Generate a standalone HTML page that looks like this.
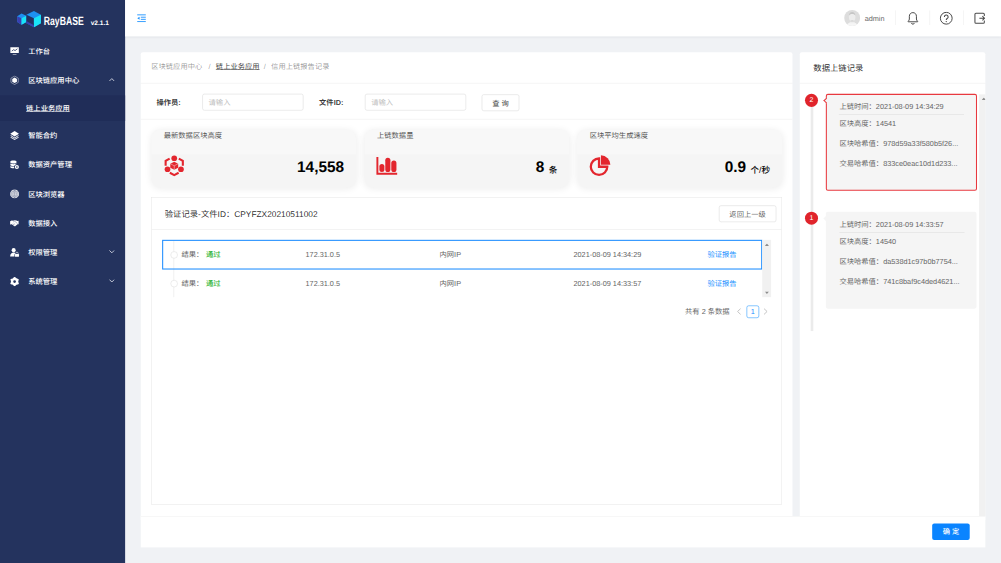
<!DOCTYPE html>
<html lang="zh-CN">
<head>
<meta charset="utf-8">
<title>RayBASE</title>
<style>
html,body{margin:0;padding:0;}
body{width:1001px;height:563px;overflow:hidden;background:#f0f2f5;}
#app{position:absolute;left:0;top:0;width:1920px;height:1080px;transform:scale(0.521354);transform-origin:0 0;background:#f0f2f5;
 font-family:"Liberation Sans","Noto Sans CJK SC",sans-serif;font-size:14px;color:rgba(0,0,0,.65);overflow:hidden;text-rendering:geometricPrecision;}
#app *{box-sizing:border-box;}
.abs{position:absolute;}
.t{position:absolute;white-space:nowrap;line-height:20px;height:20px;}
/* sidebar */
#side{position:absolute;left:0;top:0;width:240px;height:1080px;background:#24335e;}
#side .mi{position:absolute;left:0;width:240px;height:56px;color:#fff;font-weight:500;}
#side .mi .lbl{position:absolute;left:54px;top:18px;line-height:20px;font-size:14px;white-space:nowrap;}
#side .mi svg.ic{position:absolute;left:18.700px;top:19px;width:18px;height:18px;}
#side .mi svg.ch{position:absolute;left:208.500px;top:22px;width:11px;height:9.200px;}
#sub{position:absolute;left:0;top:182.500px;width:240px;height:49px;background:#202d58;}
/* header */
#head{position:absolute;left:240px;top:0;width:1680px;height:70px;background:#fff;box-shadow:0 1px 5px rgba(0,21,41,.09);}
.vdiv{position:absolute;top:20px;width:1px;height:28px;background:#ebebeb;}
/* cards */
.card{position:absolute;background:#fff;border-radius:4px;}
.hline{position:absolute;height:1px;background:#ebebeb;}
.inp{position:absolute;height:32px;border:1px solid #d9d9d9;border-radius:4px;background:#fff;}
.inp span{position:absolute;left:11px;top:5px;line-height:20px;color:#bfbfbf;font-size:14px;}
.btn{position:absolute;height:32px;border:1px solid #d9d9d9;border-radius:4px;background:#fff;text-align:center;line-height:32px;font-size:14px;color:rgba(0,0,0,.65);white-space:nowrap;}
.stat{position:absolute;top:248px;width:393px;height:111px;background:#f5f5f5;border-radius:18px;box-shadow:0 2px 14px rgba(0,0,0,.07);}
.stat .tt{position:absolute;left:24px;top:2px;line-height:20px;font-size:14px;color:#555;}
.stat .val{position:absolute;right:23px;top:48px;line-height:48px;font-size:29.5px;font-weight:bold;color:#000;white-space:nowrap;}
.stat .val small{font-size:16.500px;font-weight:500;margin-left:8.500px;position:relative;top:2.500px;}
.stat svg{position:absolute;left:24px;top:50px;width:40px;height:40px;overflow:visible;}
.rec{position:absolute;left:50px;width:289px;height:185px;background:#f5f5f5;border-radius:4px;color:#666;}
.rec .r{position:absolute;left:25px;white-space:nowrap;line-height:20px;font-size:14px;}
.badge{position:absolute;left:10px;width:25px;height:25px;border-radius:50%;background:#e0242b;color:#fff;font-size:13.500px;text-align:center;line-height:24px;}
</style>
</head>
<body>
<div id="app">

<!-- ============ SIDEBAR ============ -->
<div id="side">
  <svg class="abs" style="left:32px;top:19.500px;width:47.500px;height:33.500px" viewBox="0 0 46 33" preserveAspectRatio="none">
    <polygon points="1,11 9,6 18,10 18,22 9,27 1,22" fill="#1e90f0"/>
    <polygon points="1,11 9,15 9,27 1,22" fill="#3a3fb0"/>
    <polygon points="9,15 18,10 18,22 9,27" fill="#19e3f7"/>
    <polygon points="18,8 32,1 45,8 45,24 32,32 18,24" fill="#1e90f0"/>
    <polygon points="18,8 32,15 32,32 18,24" fill="#23315f"/>
    <polygon points="32,15 45,8 45,24 32,32" fill="#19e3f7"/>
    <polygon points="18,20 32,28 32,32 18,24" fill="#3a3fb0"/>
  </svg>
  <div class="abs" style="left:84px;top:25px;line-height:28px;font-size:23px;font-weight:bold;color:#fff;transform:scaleX(.722);transform-origin:0 0;white-space:nowrap;">RayBASE</div>
  <div class="abs" style="left:174px;top:35px;line-height:16px;font-size:12.5px;font-weight:bold;color:#fff;white-space:nowrap;">v2.1.1</div>

  <div id="sub"><div class="abs" style="left:50px;top:14.500px;line-height:20px;font-size:14px;color:#fff;font-weight:500;text-decoration:underline;text-underline-offset:1px;white-space:nowrap;">链上业务应用</div></div>

  <div class="mi" style="top:70px">
    <svg class="ic" viewBox="0 0 20 20"><path d="M1 2h18v12H1z M6 17h8v1.5H6z" fill="#fff"/><path d="M4 10l4-3 3 2 5-4" stroke="#23315f" stroke-width="1.6" fill="none"/></svg>
    <span class="lbl">工作台</span></div>
  <div class="mi" style="top:126px">
    <svg class="ic" viewBox="0 0 20 20"><path d="M10 1l7.8 4.5v9L10 19l-7.8-4.5v-9z" fill="none" stroke="#fff" stroke-width="1.05" opacity=".9"/><path d="M10 4.2l5 2.9v5.8l-5 2.9-5-2.9V7.1z" fill="#fff"/></svg>
    <span class="lbl">区块链应用中心</span>
    <svg class="ch" viewBox="0 0 12 10"><path d="M1 8l5-5 5 5" fill="none" stroke="#f0f2f8" stroke-width="1.600"/></svg></div>
  <div class="mi" style="top:232px">
    <svg class="ic" viewBox="0 0 20 20"><path d="M10 0.500l9.300 5.700L10 11.900 0.700 6.200z" fill="#fff"/><path d="M2.600 9.500L10 14l7.400-4.500 1.900 1.150L10 16.300 0.700 10.650z M2.600 12.900L10 17.400l7.400-4.500 1.900 1.150L10 19.700 0.700 14.050z" fill="#fff" opacity=".92"/></svg>
    <span class="lbl">智能合约</span></div>
  <div class="mi" style="top:288px">
    <svg class="ic" viewBox="0 0 20 20"><path d="M1 3c0-1.400 3-2.200 6.500-2.200S14 1.600 14 3v2c0 1.400-3 2.200-6.500 2.200S1 6.400 1 5z M1 7.400c1.200 1 3.600 1.400 6.500 1.400s5.300-.4 6.500-1.400v1.800a5.500 5.500 0 0 0-4.800 3.300c-.5.100-1.100.100-1.700.100C4 12.600 1 11.800 1 10.400z M1 12.600c1.200 1 3.600 1.400 6.500 1.400.5 0 1 0 1.400-.1a5.500 5.500 0 0 0 .6 3.400c-.6.100-1.300.100-2 .1C4 17.400 1 16.600 1 15.200z" fill="#fff"/><circle cx="14.800" cy="14.800" r="4.400" fill="#fff"/><circle cx="14.800" cy="14.800" r="1.700" fill="#23315f"/></svg>
    <span class="lbl">数据资产管理</span></div>
  <div class="mi" style="top:344px">
    <svg class="ic" viewBox="0 0 20 20"><circle cx="10" cy="10" r="9.400" fill="#fff"/><g fill="none" stroke="#23315f" stroke-width=".75" opacity=".85"><ellipse cx="10" cy="10" rx="3.700" ry="7.600"/><circle cx="10" cy="10" r="7.600"/><path d="M10 2.400v15.200M2.400 10h15.200M3.700 6h12.600M3.700 14h12.600"/></g></svg>
    <span class="lbl">区块浏览器</span></div>
  <div class="mi" style="top:400px">
    <svg class="ic" viewBox="0 0 20 20"><path d="M0.500 6.200l3.300-2 3.200.7 2.800-1.200 4 .6 2.200 1.300 2.500-.7v7.300l-2.300.3-4.300 3.600c-1 .7-2.200.6-3-.1L4 12.300l-3.500.4z" fill="#fff"/><path d="M7 7.300l3.200-1.300 3.300 2.200 2.300 3M6 11.500l3 2.700M8.300 10.500l3 2.700" stroke="#23315f" stroke-width=".9" fill="none" opacity=".8"/></svg>
    <span class="lbl">数据接入</span></div>
  <div class="mi" style="top:456px">
    <svg class="ic" viewBox="0 0 20 20"><circle cx="8" cy="5.300" r="4.300" fill="#fff"/><path d="M0.500 19c0-5.500 3-8.500 7.500-8.500 1.300 0 2.500.3 3.500.8-.8.800-1 1.700-1 2.700H9.500V19z" fill="#fff"/><rect x="10.500" y="13.500" width="9" height="6" rx="1" fill="#fff"/><path d="M12.500 13.500v-1.400a2.500 2.500 0 0 1 5 0v1.400" fill="none" stroke="#fff" stroke-width="1.300"/></svg>
    <span class="lbl">权限管理</span>
    <svg class="ch" viewBox="0 0 12 10"><path d="M1 2.500l5 5 5-5" fill="none" stroke="#f0f2f8" stroke-width="1.600"/></svg></div>
  <div class="mi" style="top:512px">
    <svg class="ic" viewBox="0 0 20 20"><circle cx="10" cy="10" r="5.400" fill="none" stroke="#fff" stroke-width="5"/><g fill="#fff"><circle cx="10" cy="2.700" r="2.500"/><circle cx="10" cy="17.300" r="2.500"/><circle cx="3.700" cy="6.350" r="2.500"/><circle cx="16.300" cy="6.350" r="2.500"/><circle cx="3.700" cy="13.650" r="2.500"/><circle cx="16.300" cy="13.650" r="2.500"/></g></svg>
    <span class="lbl">系统管理</span>
    <svg class="ch" viewBox="0 0 12 10"><path d="M1 2.500l5 5 5-5" fill="none" stroke="#f0f2f8" stroke-width="1.600"/></svg></div>
</div>

<!-- ============ HEADER ============ -->
<div id="head">
  <svg class="abs" style="left:23.400px;top:27px;width:17px;height:16px" viewBox="0 0 17 16"><path d="M0 1.500h16.700M7.100 6h9.600M7.100 10.100h9.600M0 14.400h16.700" stroke="#1890ff" stroke-width="1.700" fill="none"/><path d="M0.300 8l4.400-3v6z" fill="#1890ff"/></svg>
  <svg class="abs" style="left:1379px;top:18.500px;width:31px;height:31px" viewBox="0 0 31 31"><defs><clipPath id="avc"><circle cx="15.500" cy="15.500" r="15.300"/></clipPath></defs><circle cx="15.500" cy="15.500" r="15.300" fill="#dddddd"/><g clip-path="url(#avc)"><ellipse cx="15.500" cy="30" rx="10" ry="6.500" fill="#f6f6f6"/><ellipse cx="15.500" cy="13.500" rx="6.300" ry="8.300" fill="#ededed"/><path d="M9.300 11c0-4.500 2.700-7 6.200-7s6.200 2.500 6.200 7c-1.200-2.300-3.200-3.300-6.200-3.300S10.500 8.700 9.300 11z" fill="#c6c6c6"/><ellipse cx="15.500" cy="21.300" rx="3.400" ry="1.500" fill="#d2d2d2"/><path d="M11.500 22.500h8l1.500 3h-11z" fill="#efefef"/></g></svg>
  <div class="t" style="left:1418.500px;top:24.500px;color:#6a6a6a;font-size:14px;">admin</div>
  <div class="vdiv" style="left:1477px"></div>
  <div class="vdiv" style="left:1543px"></div>
  <div class="vdiv" style="left:1608px"></div>
  <svg class="abs" style="left:1498.500px;top:22px;width:24px;height:26px" viewBox="0 0 24 26"><path d="M12 2.200c-4 0-6.800 3-6.800 7v5.300c0 1.600-.7 2.900-2.300 4.300v1h18.200v-1c-1.600-1.400-2.300-2.700-2.300-4.300V9.200c0-4-2.800-7-6.800-7z" fill="none" stroke="#4a4a4a" stroke-width="1.900" stroke-linejoin="round"/><path d="M9.200 22.200a2.900 2.900 0 0 0 5.600 0" fill="none" stroke="#4a4a4a" stroke-width="1.900"/></svg>
  <svg class="abs" style="left:1562.200px;top:22px;width:26px;height:26px" viewBox="0 0 26 26"><circle cx="13" cy="13" r="11.300" fill="none" stroke="#4a4a4a" stroke-width="1.900"/><path d="M9.400 10.400a3.600 3.600 0 1 1 5.400 3.100c-1.300.8-1.800 1.500-1.800 3" fill="none" stroke="#4a4a4a" stroke-width="2"/><circle cx="13" cy="19.400" r="1.300" fill="#4a4a4a"/></svg>
  <svg class="abs" style="left:1628.300px;top:23.400px;width:24px;height:24px" viewBox="0 0 24 24"><path d="M20 7.600V4.500a2 2 0 0 0-2-2H4a2 2 0 0 0-2 2v15a2 2 0 0 0 2 2h14a2 2 0 0 0 2-2v-3.100" fill="none" stroke="#4a4a4a" stroke-width="2"/><path d="M10.500 12H20.300M16.300 8l4 4-4 4" fill="none" stroke="#4a4a4a" stroke-width="2"/></svg>
</div>

<!-- ============ LEFT CARD ============ -->
<div class="card" style="left:270px;top:100px;width:1250px;height:900px;">
  <!-- breadcrumb (coords relative to card: subtract 270,100) -->
  <div class="t" style="left:20px;top:17px;color:rgba(0,0,0,.42);">区块链应用中心</div>
  <div class="t" style="left:130px;top:17px;color:rgba(0,0,0,.42);">/</div>
  <div class="t" style="left:144px;top:17px;color:rgba(0,0,0,.78);text-decoration:underline;text-underline-offset:0.5px;text-decoration-thickness:1px;">链上业务应用</div>
  <div class="t" style="left:236px;top:17px;color:rgba(0,0,0,.42);">/</div>
  <div class="t" style="left:250px;top:17px;color:rgba(0,0,0,.42);">信用上链报告记录</div>
  <div class="hline" style="left:0;top:59px;width:1250px;"></div>

  <!-- filter -->
  <div class="t" style="left:30px;top:86px;font-weight:bold;color:rgba(0,0,0,.78);">操作员:</div>
  <div class="inp" style="left:118px;top:80px;width:194px;"><span>请输入</span></div>
  <div class="t" style="left:342px;top:86px;font-weight:bold;color:rgba(0,0,0,.78);">文件ID:</div>
  <div class="inp" style="left:430px;top:80px;width:194px;"><span>请输入</span></div>
  <div class="btn" style="left:654px;top:80.500px;width:72px;font-weight:500;">查 询</div>
  <div class="hline" style="left:0;top:128px;width:1250px;"></div>
</div>

<!-- stat cards -->
<div class="stat" style="left:290px;">
  <div class="abs" style="left:0;top:0;width:100%;height:49px;background:rgba(255,255,255,.28);border-bottom:1px solid rgba(0,0,0,.022);border-radius:18px 18px 0 0;"></div><div class="tt">最新数据区块高度</div>
  <svg viewBox="0 0 40 40"><g fill="#e3262e"><circle cx="20.200" cy="5.500" r="5.450"/><circle cx="7.300" cy="26.600" r="5.450"/><circle cx="33.100" cy="26.600" r="5.450"/><path d="M20.200 12.100l7.600 3.900v7.600l-7.600 3.800-7.600-3.800V16z"/></g><g fill="none" stroke="#e3262e" stroke-width="4"><path d="M3.700 20V10.600l7.700-4.500"/><path d="M36.700 20V10.600L29 6.100"/><path d="M11.800 33.400l8.400 4.400 8.400-4.400"/></g><path d="M20.200 20v7.400M20.200 20l-7.600-4M20.200 20l7.600-4" stroke="#f5f5f5" stroke-width="1.100" fill="none" opacity=".8"/></svg>
  <div class="val">14,558</div>
</div>
<div class="stat" style="left:699px;">
  <div class="abs" style="left:0;top:0;width:100%;height:49px;background:rgba(255,255,255,.28);border-bottom:1px solid rgba(0,0,0,.022);border-radius:18px 18px 0 0;"></div><div class="tt">上链数据量</div>
  <svg viewBox="0 0 40 40" style="left:22.700px"><g fill="#e3262e"><path d="M0 3h3.700v30.400h36.100V37H0z"/><rect x="5.700" y="16.600" width="9.600" height="15.300" rx="4.800"/><rect x="17" y="4.400" width="9.800" height="27.500" rx="4.900"/><rect x="28.500" y="9.800" width="9.900" height="22.100" rx="4.900"/></g></svg>
  <div class="val">8<small>条</small></div>
</div>
<div class="stat" style="left:1107px;">
  <div class="abs" style="left:0;top:0;width:100%;height:49px;background:rgba(255,255,255,.28);border-bottom:1px solid rgba(0,0,0,.022);border-radius:18px 18px 0 0;"></div><div class="tt">区块平均生成速度</div>
  <svg viewBox="0 0 40 40"><path d="M18 6A15.800 15.800 0 1 0 33.800 21.800H18z" fill="none" stroke="#e3262e" stroke-width="4.400" stroke-linejoin="miter"/><path d="M21.700 18.100V0A18.100 18.100 0 0 1 39.800 18.100z" fill="#e3262e"/></svg>
  <div class="val">0.9<small>个/秒</small></div>
</div>

<!-- inner panel -->
<div class="abs" style="left:290px;top:378px;width:1210px;height:590px;border:1px solid #e6e6e6;border-radius:0;background:#fff;">
  <div class="t" style="left:25px;top:22px;font-size:16px;line-height:22px;height:22px;color:rgba(0,0,0,.85);">验证记录-文件ID：CPYFZX20210511002</div>
  <div class="btn" style="left:1088px;top:15px;width:110px;">返回上一级</div>
  <div class="hline" style="left:0;top:61px;width:1208px;background:#e8e8e8;"></div>
</div>

<!-- list -->
<div class="abs" style="left:311px;top:460px;width:1169px;height:110px;">
  <div class="abs" style="left:21.500px;top:2px;width:1.500px;height:108px;background:#e2e2e2;"></div>
  <div class="abs" style="left:0;top:-0.500px;width:1151px;height:57.500px;border:2.300px solid #1b8cff;"></div>
  <div class="abs" style="left:15.500px;top:22px;width:14px;height:14px;border-radius:50%;border:1.500px solid #dcdcdc;background:#fff;"></div>
  <div class="abs" style="left:15.500px;top:77px;width:14px;height:14px;border-radius:50%;border:1.500px solid #dcdcdc;background:#fff;"></div>
  <div class="t" style="left:37px;top:18px;font-size:14px;color:#666;">结果：<span style="color:#2fb536;font-weight:500;margin-left:5px">通过</span></div>
  <div class="t" style="left:275px;top:18px;color:#666;">172.31.0.5</div>
  <div class="t" style="left:532px;top:18px;color:#666;">内网IP</div>
  <div class="t" style="left:789px;top:18px;color:#666;">2021-08-09 14:34:29</div>
  <div class="t" style="left:1046px;top:18px;color:#1890ff;">验证报告</div>
  <div class="t" style="left:37px;top:73px;font-size:14px;color:#666;">结果：<span style="color:#2fb536;font-weight:500;margin-left:5px">通过</span></div>
  <div class="t" style="left:275px;top:73px;color:#666;">172.31.0.5</div>
  <div class="t" style="left:532px;top:73px;color:#666;">内网IP</div>
  <div class="t" style="left:789px;top:73px;color:#666;">2021-08-09 14:33:57</div>
  <div class="t" style="left:1046px;top:73px;color:#1890ff;">验证报告</div>
  <!-- scrollbar -->
  <div class="abs" style="left:1151px;top:0;width:17px;height:110px;background:#f1f1f1;">
    <svg class="abs" style="left:4.500px;top:6.500px;width:8px;height:5px" viewBox="0 0 8 5"><path d="M0 5L4 0l4 5z" fill="#8c8c8c"/></svg>
    <svg class="abs" style="left:4.500px;top:98.500px;width:8px;height:5px" viewBox="0 0 8 5"><path d="M0 0l4 5 4-5z" fill="#8c8c8c"/></svg>
  </div>
</div>
<!-- pagination -->
<div class="t" style="left:1314px;top:587px;color:#666;">共有 2 条数据</div>
<svg class="abs" style="left:1413px;top:590.500px;width:9px;height:13px" viewBox="0 0 9 13"><path d="M7.500 1L1.700 6.500l5.800 5.500" fill="none" stroke="#bdbdbd" stroke-width="1.700"/></svg>
<div class="abs" style="left:1432px;top:585.500px;width:24px;height:24px;border:1px solid #1890ff;border-radius:4px;color:#1890ff;text-align:center;line-height:22px;font-size:14px;background:#fff;">1</div>
<svg class="abs" style="left:1464px;top:590.500px;width:9px;height:13px" viewBox="0 0 9 13"><path d="M1.500 1l5.800 5.500L1.500 12" fill="none" stroke="#bdbdbd" stroke-width="1.700"/></svg>

<!-- ============ RIGHT CARD ============ -->
<div class="card" style="left:1534px;top:100px;width:356px;height:900px;">
  <div class="t" style="left:26px;top:21px;font-size:16px;line-height:22px;height:22px;color:rgba(0,0,0,.85);">数据上链记录</div>
  <div class="hline" style="left:0;top:59px;width:356px;"></div>
  <!-- timeline line -->
  <div class="abs" style="left:20.500px;top:92px;width:5px;height:443px;background:#ebebeb;"></div>
  <div class="badge" style="top:80px;">2</div>
  <div class="badge" style="top:305.500px;">1</div>
  <!-- record 1 -->
  <div class="abs" style="left:47px;top:88.500px;width:8px;height:8px;background:#f5f5f5;border-left:2px solid #e8353b;border-bottom:2px solid #e8353b;transform:rotate(45deg);z-index:2"></div>
  <div class="rec" style="top:80px;height:186px;width:290px;border:2.200px solid #e8393f;">
    <div class="r" style="top:13px;left:24px">上链时间：2021-08-09 14:34:29</div>
    <div class="hline" style="left:23px;top:37px;width:240px;background:#dcdcdc;"></div>
    <div class="r" style="top:45px;left:24px">区块高度：14541</div>
    <div class="r" style="top:83px;left:24px">区块哈希值：978d59a33f580b5f26...</div>
    <div class="r" style="top:120.500px;left:24px">交易哈希值：833ce0eac10d1d233...</div>
  </div>
  <!-- record 2 -->
  <div class="abs" style="left:46.500px;top:315px;width:8px;height:8px;background:#f5f5f5;transform:rotate(45deg);"></div>
  <div class="rec" style="top:306px;height:186px;">
    <div class="r" style="top:14.500px;left:26px">上链时间：2021-08-09 14:33:57</div>
    <div class="hline" style="left:26px;top:39px;width:240px;background:#dcdcdc;"></div>
    <div class="r" style="top:46.500px;left:26px">区块高度：14540</div>
    <div class="r" style="top:85px;left:26px">区块哈希值：da538d1c97b0b7754...</div>
    <div class="r" style="top:122.500px;left:26px">交易哈希值：741c8baf9c4ded4621...</div>
  </div>
  <!-- scrollbar -->
  <div class="abs" style="left:344px;top:81px;width:12px;height:810px;background:#f1f1f1;overflow:hidden;">
    <svg class="abs" style="left:4.500px;top:6px;width:8px;height:5px" viewBox="0 0 8 5"><path d="M0 5L4 0l4 5z" fill="#8c8c8c"/></svg>
  </div>
</div>

<!-- ============ FOOTER ============ -->
<div class="abs" style="left:270px;top:990px;width:1620px;height:60px;background:#fff;border-top:1px solid #f0f0f0;">
  <div class="abs" style="left:1518px;top:12.500px;width:72px;height:32px;border-radius:4px;background:#0a84ff;color:#fff;font-weight:500;text-align:center;line-height:32px;font-size:14px;">确 定</div>
</div>

</div>
</body>
</html>
